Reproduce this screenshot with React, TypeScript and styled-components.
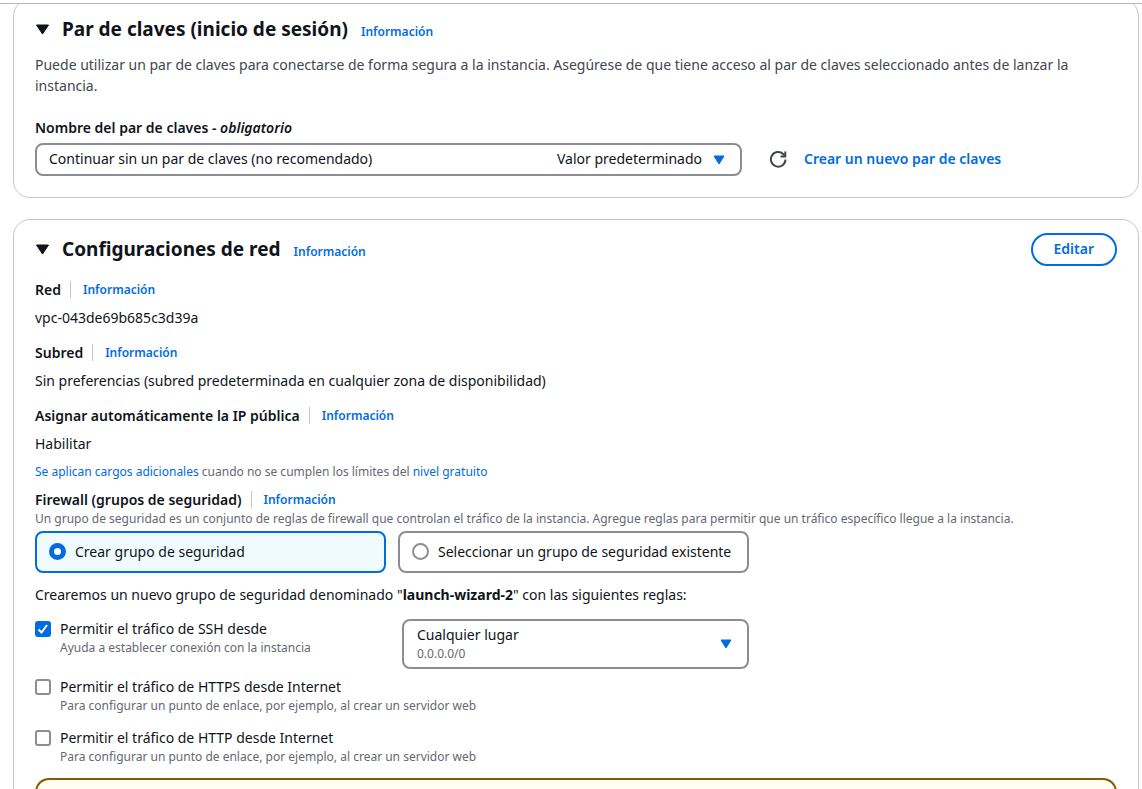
import React from "react";
import styled, { createGlobalStyle } from "styled-components";

const blue = "#006ce0";
const ink = "#0f141a";
const muted = "#656871";
const control = "#8c8c94";

const GlobalStyle = createGlobalStyle`
  *, *::before, *::after { box-sizing: border-box; }
  body {
    margin: 0;
    background: #fff;
    color: ${ink};
    font-family: "Noto Sans", "Open Sans", sans-serif;
    font-size: 14px;
    line-height: 21px;
  }
  h2, p { margin: 0; }
  button, input, select { font: inherit; color: inherit; margin: 0; }
`;

const Page = styled.div`
  display: flex;
  flex-direction: column;
  height: 100vh;
  overflow: hidden;
`;

const TopBar = styled.header`
  flex: none;
  height: 4px;
  border-bottom: 1px solid #b4b4bb;
`;

const Content = styled.main`
  flex: 1;
  min-height: 0;
  overflow: hidden;
  padding: 0 3px 0 13px;
`;

const Card = styled.section`
  border: 1px solid #c6c6cd;
  border-radius: 17px;
  padding: 13px 21px 21px;
  margin-bottom: 21px;

  &:first-child { margin-top: -5px; }
`;

const CardHeader = styled.div`
  display: flex;
  align-items: center;
  height: 33px;
`;

const Heading = styled.div`
  display: flex;
  flex: 1;
  align-items: baseline;
  gap: 13px;
`;

const Toggle = styled.button`
  display: flex;
  align-items: center;
  width: 27px;
  height: 33px;
  padding: 0;
  border: 0;
  background: none;
`;

const Title = styled.h2`
  font-size: 19px;
  line-height: 31px;
  font-weight: 700;
`;

const Link = styled.a<{ $strong?: boolean }>`
  color: ${blue};
  text-decoration: none;
  font-weight: ${(p) => (p.$strong ? 600 : 400)};
`;

const InfoLink = styled(Link)`
  font-size: 12px;
  font-weight: 600;
`;

const Intro = styled.p`
  margin-top: 8px;
  color: #424650;
`;

const Label = styled.label`
  display: block;
  margin: 21px 0 5px;
  font-weight: 600;
`;

const KeyRow = styled.div`
  display: flex;
  align-items: center;
`;

const Dropdown = styled.div<{ $width: number; $height: number }>`
  display: grid;
  grid-template-columns: 1fr auto auto;
  align-items: center;
  width: ${(p) => p.$width}px;
  height: ${(p) => p.$height}px;
  padding-right: 15px;
  border: 2px solid ${control};
  border-radius: 8px;
`;

const Select = styled.select`
  grid-area: 1 / 1 / 2 / 4;
  align-self: stretch;
  margin-right: -15px;
  padding: 0 12px 2px;
  border: 0;
  background: none;
  appearance: none;
`;

const TallSelect = styled(Select)`
  padding: 0 13px 20px;
`;

const SelectTag = styled.span`
  grid-area: 1 / 2;
  margin-right: 11px;
  padding-bottom: 2px;
  pointer-events: none;
`;

const SelectNote = styled.span`
  grid-area: 1 / 1;
  align-self: end;
  padding: 0 0 4px 13px;
  color: ${muted};
  font-size: 12px;
  line-height: 18px;
  pointer-events: none;
`;

const SelectArrow = styled.svg`
  grid-area: 1 / 3;
  pointer-events: none;
`;

const RefreshButton = styled.button`
  display: flex;
  margin: 0 17px 0 27px;
  padding: 0 0 2px;
  border: 0;
  background: none;
`;

const CreateLink = styled(Link)`
  padding-bottom: 2px;
`;

const EditButton = styled.button`
  height: 33px;
  padding: 0 21px 2px;
  border: 2px solid ${blue};
  border-radius: 20px;
  background: #fff;
  color: ${blue};
  font-weight: 600;
`;

const Field = styled.div`
  margin-top: 14px;

  ${CardHeader} + & { margin-top: 13px; }
`;

const FieldLabel = styled.div`
  display: flex;
  align-items: center;
  height: 21px;
  font-weight: 600;
`;

const Divider = styled.span`
  width: 1px;
  height: 17px;
  margin: 0 12px 0 9px;
  background: #c6c6cd;
`;

const Value = styled.p`
  margin-top: 7px;
`;

const Hint = styled.p`
  color: ${muted};
  font-size: 12px;
  line-height: 18px;
`;

const Charges = styled(Hint)`
  margin: 9px 0 8px;
`;

const Tiles = styled.div`
  display: flex;
  gap: 12px;
  margin: 3px 0 11px;
`;

const Tile = styled.label<{ $selected?: boolean }>`
  display: flex;
  align-items: center;
  gap: 9px;
  width: 351px;
  height: 42px;
  padding: 0 12px 2px;
  border: 2px solid ${(p) => (p.$selected ? blue : control)};
  border-radius: 8px;
  background: ${(p) => (p.$selected ? "#f0fbff" : "#fff")};
`;

const Radio = styled.input`
  appearance: none;
  width: 17px;
  height: 17px;
  border: 2px solid ${control};
  border-radius: 50%;
  background: #fff;

  &:checked { border: 5px solid ${blue}; }
`;

const Rules = styled.div`
  display: grid;
  gap: 13px;
`;

const SshRow = styled.div`
  display: flex;
  align-items: flex-start;
  margin: 14px 0 8px;
`;

const Rule = styled.label`
  display: flex;
  align-items: flex-start;
  gap: 9px;
  width: 367px;
  line-height: 20px;
`;

const WideRule = styled(Rule)`
  width: auto;
`;

const CheckSlot = styled.span`
  display: grid;
  margin-top: 2px;
`;

const Checkbox = styled.input`
  grid-area: 1 / 1;
  appearance: none;
  width: 16px;
  height: 16px;
  border: 2px solid ${control};
  border-radius: 3px;
  background: #fff;

  &:checked { border-color: ${blue}; background: ${blue}; }
`;

const Tick = styled.svg`
  grid-area: 1 / 1;
  pointer-events: none;
`;

const Alert = styled.div`
  height: 84px;
  margin-top: 12px;
  border: 2px solid #855900;
  border-radius: 14px;
  background: #fffef0;
`;

const Caret = () => (
  <svg width="15" height="12" viewBox="0 0 15 12" aria-hidden="true">
    <path d="M1.5 1h12l-6 9z" fill={ink} stroke={ink} strokeLinejoin="round" />
  </svg>
);

const Arrow = () => (
  <SelectArrow width="12" height="10" viewBox="0 0 12 10" aria-hidden="true">
    <path d="M1 1h10L6 9z" fill={blue} stroke={blue} strokeLinejoin="round" />
  </SelectArrow>
);

const Info = () => <InfoLink href="#info">Información</InfoLink>;

function CardTitle({ children }: { children: React.ReactNode }) {
  return (
    <>
      <Toggle aria-label="Contraer sección"><Caret /></Toggle>
      <Heading>
        <Title>{children}</Title>
        <Info />
      </Heading>
    </>
  );
}

function FieldTitle({ children }: { children: React.ReactNode }) {
  return (
    <FieldLabel>
      {children}
      <Divider />
      <Info />
    </FieldLabel>
  );
}

function CheckRule({ title, note, checked, wide }: { title: string; note: string; checked?: boolean; wide?: boolean }) {
  const Row = wide ? WideRule : Rule;
  return (
    <Row>
      <CheckSlot>
        <Checkbox type="checkbox" defaultChecked={checked} />
        {checked && (
          <Tick width="16" height="16" viewBox="0 0 16 16" aria-hidden="true">
            <path d="M3.5 8.5l3 3 5.5-7.5" fill="none" stroke="#fff" strokeWidth="2" />
          </Tick>
        )}
      </CheckSlot>
      <div>
        {title}
        <Hint>{note}</Hint>
      </div>
    </Row>
  );
}

export default function App() {
  return (
    <Page>
      <GlobalStyle />
      <TopBar />
      <Content>
        <Card>
          <CardHeader>
            <CardTitle>Par de claves (inicio de sesión)</CardTitle>
          </CardHeader>
          <Intro>
            Puede utilizar un par de claves para conectarse de forma segura a la instancia. Asegúrese de que tiene
            acceso al par de claves seleccionado antes de lanzar la instancia.
          </Intro>
          <Label htmlFor="key-pair">
            Nombre del par de claves - <em>obligatorio</em>
          </Label>
          <KeyRow>
            <Dropdown $width={707} $height={33}>
              <Select id="key-pair">
                <option>Continuar sin un par de claves (no recomendado)</option>
              </Select>
              <SelectTag>Valor predeterminado</SelectTag>
              <Arrow />
            </Dropdown>
            <RefreshButton aria-label="Actualizar">
              <svg width="18" height="18" viewBox="0 0 18 18" fill="none" stroke="#424650" strokeWidth="2" aria-hidden="true">
                <path d="M16.5 9.5A7.3 7.3 0 1 1 14.2 4L16 6.2" />
                <path d="M16.3 1.5v5H11.5" />
              </svg>
            </RefreshButton>
            <CreateLink $strong href="#crear">Crear un nuevo par de claves</CreateLink>
          </KeyRow>
        </Card>

        <Card>
          <CardHeader>
            <CardTitle>Configuraciones de red</CardTitle>
            <EditButton>Editar</EditButton>
          </CardHeader>
          <Field>
            <FieldTitle>Red</FieldTitle>
            <Value>vpc-043de69b685c3d39a</Value>
          </Field>
          <Field>
            <FieldTitle>Subred</FieldTitle>
            <Value>Sin preferencias (subred predeterminada en cualquier zona de disponibilidad)</Value>
          </Field>
          <Field>
            <FieldTitle>Asignar automáticamente la IP pública</FieldTitle>
            <Value>Habilitar</Value>
          </Field>
          <Charges>
            <Link href="#cargos">Se aplican cargos adicionales</Link> cuando no se cumplen los límites del{" "}
            <Link href="#gratuito">nivel gratuito</Link>
          </Charges>
          <FieldTitle>Firewall (grupos de seguridad)</FieldTitle>
          <Hint>
            Un grupo de seguridad es un conjunto de reglas de firewall que controlan el tráfico de la instancia. Agregue
            reglas para permitir que un tráfico específico llegue a la instancia.
          </Hint>
          <Tiles>
            <Tile $selected>
              <Radio type="radio" name="group" defaultChecked />
              Crear grupo de seguridad
            </Tile>
            <Tile>
              <Radio type="radio" name="group" />
              Seleccionar un grupo de seguridad existente
            </Tile>
          </Tiles>
          <p>
            Crearemos un nuevo grupo de seguridad denominado "<b>launch-wizard-2</b>" con las siguientes reglas:
          </p>
          <SshRow>
            <CheckRule title="Permitir el tráfico de SSH desde" note="Ayuda a establecer conexión con la instancia" checked />
            <Dropdown $width={347} $height={50}>
              <TallSelect aria-label="Origen del tráfico SSH">
                <option>Cualquier lugar</option>
              </TallSelect>
              <SelectNote>0.0.0.0/0</SelectNote>
              <Arrow />
            </Dropdown>
          </SshRow>
          <Rules>
            <CheckRule wide title="Permitir el tráfico de HTTPS desde Internet" note="Para configurar un punto de enlace, por ejemplo, al crear un servidor web" />
            <CheckRule wide title="Permitir el tráfico de HTTP desde Internet" note="Para configurar un punto de enlace, por ejemplo, al crear un servidor web" />
          </Rules>
          <Alert role="alert" />
        </Card>
      </Content>
    </Page>
  );
}
